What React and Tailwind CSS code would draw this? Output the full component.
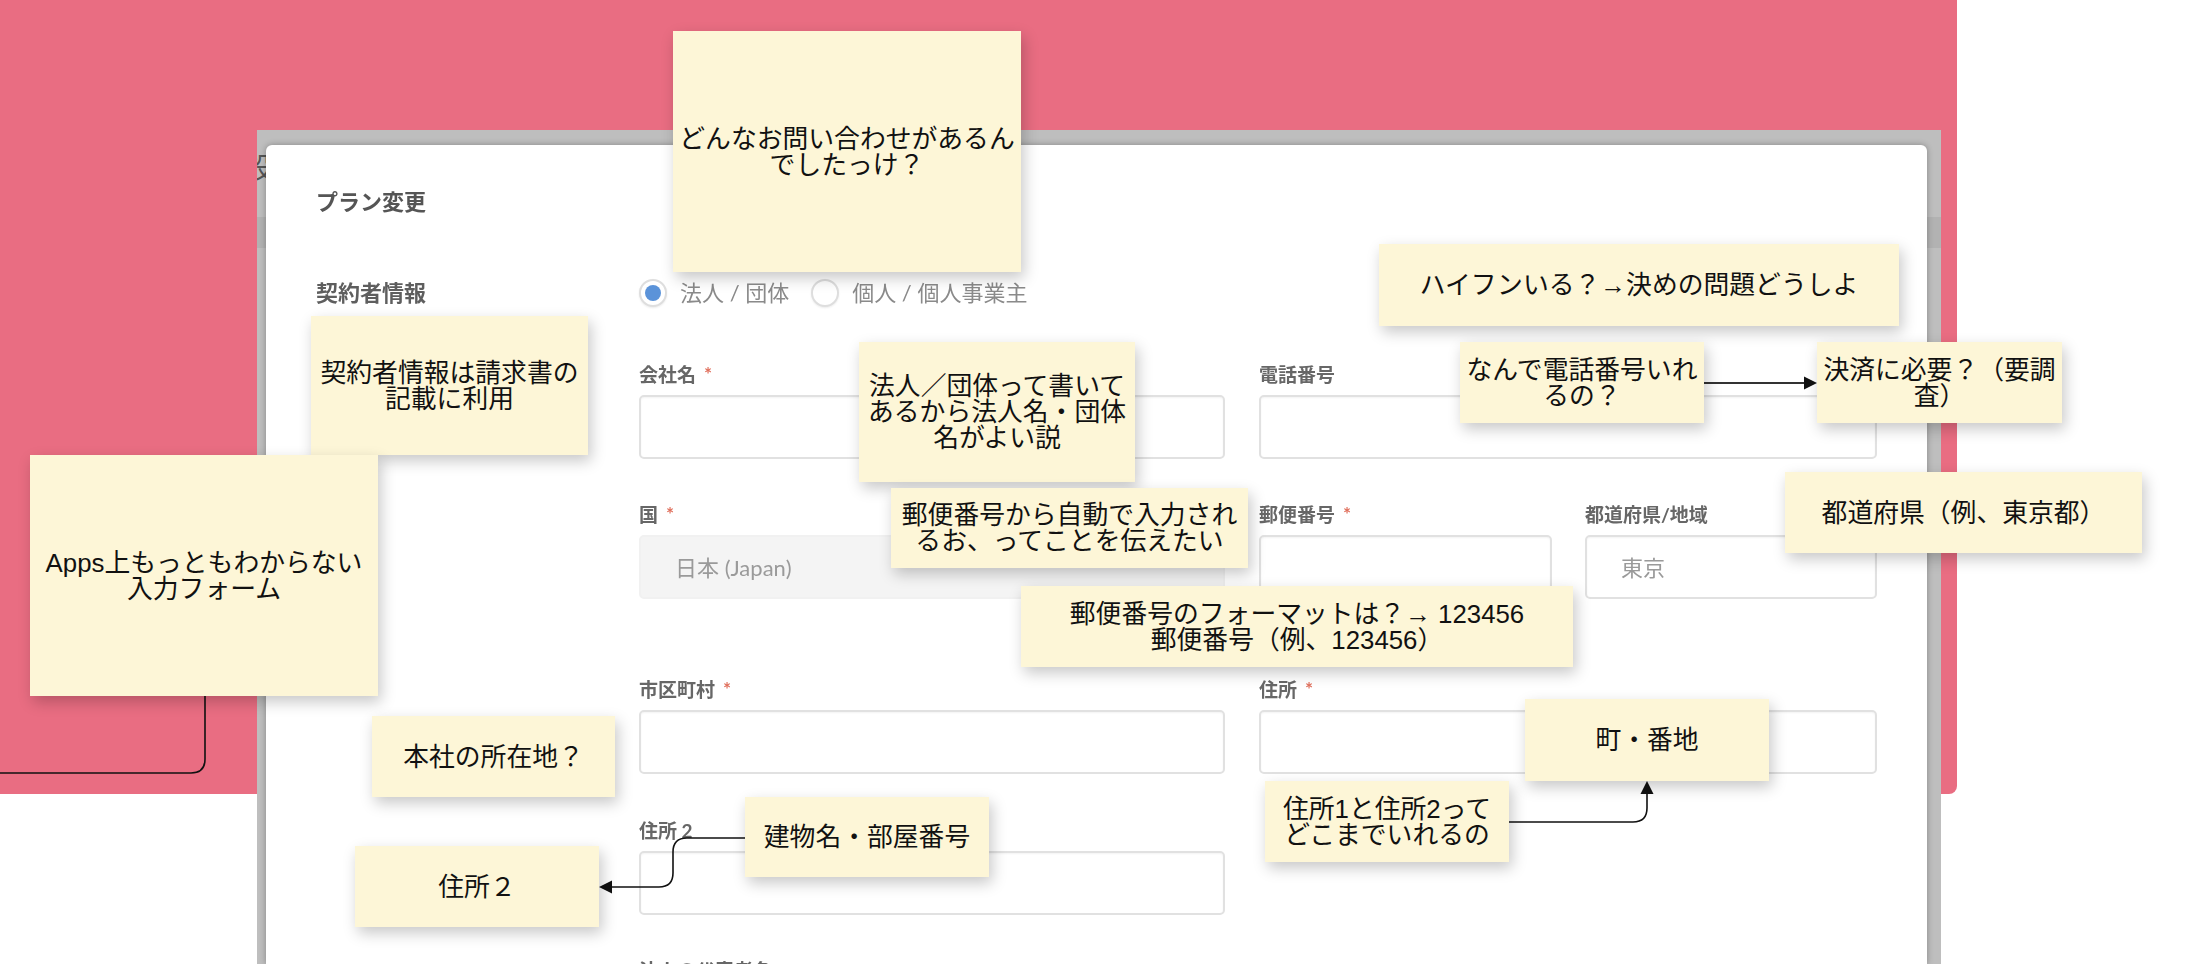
import React from "react";

// sticky notes laid on top of the screenshot (free canvas positions)
const notes = [
  { cls: "left-[673px] top-[31px] w-[348px] h-[241px]", lines: ["どんなお問い合わせがあるん", "でしたっけ？"] },
  { cls: "left-[311px] top-[316px] w-[277px] h-[139px]", lines: ["契約者情報は請求書の", "記載に利用"] },
  { cls: "left-[30px] top-[455px] w-[348px] h-[241px]", lines: ["Apps上もっともわからない", "入力フォーム"] },
  { cls: "left-[859px] top-[342px] w-[276px] h-[140px]", lines: ["法人／団体って書いて", "あるから法人名・団体", "名がよい説"] },
  { cls: "left-[891px] top-[488px] w-[357px] h-[80px]", lines: ["郵便番号から自動で入力され", "るお、ってことを伝えたい"] },
  { cls: "left-[1021px] top-[586px] w-[552px] h-[81px]", lines: ["郵便番号のフォーマットは？→ 123456", "郵便番号（例、123456）"] },
  { cls: "left-[1379px] top-[244px] w-[520px] h-[82px]", lines: ["ハイフンいる？→決めの問題どうしよ"] },
  { cls: "left-[1460px] top-[342px] w-[244px] h-[81px]", lines: ["なんで電話番号いれ", "るの？"] },
  { cls: "left-[1817px] top-[342px] w-[245px] h-[81px]", lines: ["決済に必要？（要調", "査）"] },
  { cls: "left-[1785px] top-[472px] w-[357px] h-[81px]", lines: ["都道府県（例、東京都）"] },
  { cls: "left-[1525px] top-[699px] w-[244px] h-[82px]", lines: ["町・番地"] },
  { cls: "left-[1265px] top-[781px] w-[244px] h-[81px]", lines: ["住所1と住所2って", "どこまでいれるの"] },
  { cls: "left-[372px] top-[716px] w-[243px] h-[81px]", lines: ["本社の所在地？"] },
  { cls: "left-[745px] top-[797px] w-[244px] h-[80px]", lines: ["建物名・部屋番号"] },
  { cls: "left-[355px] top-[846px] w-[244px] h-[81px]", lines: ["住所２"] },
];

function Note({ cls, lines }) {
  return (
    <div
      className={`absolute ${cls} flex flex-col items-center justify-center bg-[#fdf6d7] shadow-[3px_6px_14px_rgba(0,0,0,0.22)] text-center text-[25.8px] leading-[26px] text-[#111] whitespace-nowrap`}
    >
      {lines.map((l) => (
        <span key={l}>{l}</span>
      ))}
    </div>
  );
}

function Label({ text, required }) {
  return (
    <div className="flex items-center h-[26px] mb-[7px] text-[19px] font-bold text-[#676767]">
      {text}
      {required && <span className="ml-[8px] text-[19px] leading-[19px] text-[#e06f5c] -mt-[3px]">*</span>}
    </div>
  );
}

function Input({ children, muted }) {
  return (
    <div
      className={`h-[64px] rounded-[5px] border-2 flex items-center px-[34px] text-[22px] text-[#9a9a9a] ${
        muted ? "bg-[#f4f4f4] border-[#f1f1f1]" : "bg-white border-[#e1e1e1] shadow-[inset_0_1px_2px_rgba(0,0,0,0.05)]"
      }`}
    >
      {children}
    </div>
  );
}

function Field({ label, required, children, muted }) {
  return (
    <div className="flex flex-col">
      <Label text={label} required={required} />
      <Input muted={muted}>{children}</Input>
    </div>
  );
}

function Radio({ checked, label }) {
  return (
    <label className="flex items-center gap-[13px]">
      <span className="w-[28px] h-[28px] rounded-full border-2 border-[#dedede] bg-white flex items-center justify-center shadow-[0_1px_2px_rgba(0,0,0,0.08)]">
        {checked && <span className="w-[16px] h-[16px] rounded-full bg-[#5b93d9]" />}
      </span>
      <span className="text-[22px] text-[#8a8a8a]">{label}</span>
    </label>
  );
}

export default function App() {
  return (
    <div className="relative w-[2186px] h-[964px] overflow-hidden bg-white font-['Liberation_Sans','Noto_Sans_CJK_JP',sans-serif]">
      {/* pink board */}
      <div className="w-[1957px] h-[794px] bg-[#e96d82] rounded-br-[8px]" />

      {/* pasted screenshot of the dialog */}
      <div className="absolute left-[257px] top-[130px] w-[1684px] h-[834px] bg-[#bebebe] pt-[15px] pl-[9px] pr-[14px] overflow-hidden">
        <div className="absolute left-0 top-[87px] w-full h-[31px] bg-[#b2b2b2]" />
        <div className="absolute left-[-12px] top-[20px] text-[28px] leading-[32px] text-[#555] font-['Noto_Sans_CJK_JP',sans-serif]">設</div>

        <div className="relative h-full bg-white rounded-t-[6px] shadow-[0_0_6px_rgba(0,0,0,0.3)] px-[50px] pt-[42px]">
          <div className="blur-[0.4px] font-['Lato','Noto_Sans_CJK_JP',sans-serif]">
            <div className="text-[22px] leading-[30px] font-bold text-[#555]">プラン変更</div>

            <div className="mt-[59px] grid grid-cols-[323px_1fr] items-center h-[28px]">
              <div className="text-[22px] font-bold text-[#5e5e5e]">契約者情報</div>
              <div className="flex items-center gap-[22px]">
                <Radio checked label="法人 / 団体" />
                <Radio label="個人 / 個人事業主" />
              </div>
            </div>

            <div className="ml-[323px] w-[1238px] mt-[58px] flex flex-col">
              <div className="grid grid-cols-[586px_618px] gap-x-[34px]">
                <Field label="会社名" required />
                <Field label="電話番号" />
              </div>

              <div className="grid grid-cols-[586px_618px] gap-x-[34px] mt-[43px]">
                <Field label="国" required muted>
                  日本 (Japan)
                </Field>
                <div className="grid grid-cols-[293px_292px] gap-x-[33px]">
                  <Field label="郵便番号" required />
                  <Field label="都道府県/地域">東京</Field>
                </div>
              </div>

              <div className="grid grid-cols-[586px_618px] gap-x-[34px] mt-[78px]">
                <Field label="市区町村" required />
                <Field label="住所" required />
              </div>

              <div className="grid grid-cols-[586px_618px] gap-x-[34px] mt-[44px]">
                <Field label="住所 2" />
              </div>

              <div className="mt-[43px]">
                <Label text="法人の代表者名" />
              </div>
            </div>
          </div>
        </div>
      </div>

      {/* connectors */}
      <svg className="absolute left-0 top-0 pointer-events-none" width="2186" height="964">
        <g fill="none" stroke="#111" strokeWidth="1.6">
          <path d="M1704 383 H1806" stroke="#333" strokeWidth="2" />
          <path d="M1509 822 H1633 Q1647 822 1647 808 V793" />
          <path d="M745 838 H687 Q673 838 673 852 V873 Q673 887 659 887 H610" />
          <path d="M205 696 V759 Q205 773 191 773 H0" />
        </g>
        <g fill="#111">
          <polygon points="1817,383 1804,376.5 1804,389.5" />
          <polygon points="1647,781 1640.5,794 1653.5,794" />
          <polygon points="599,887 612,880.5 612,893.5" />
        </g>
      </svg>

      {notes.map((n) => (
        <Note key={n.cls} cls={n.cls} lines={n.lines} />
      ))}
    </div>
  );
}
